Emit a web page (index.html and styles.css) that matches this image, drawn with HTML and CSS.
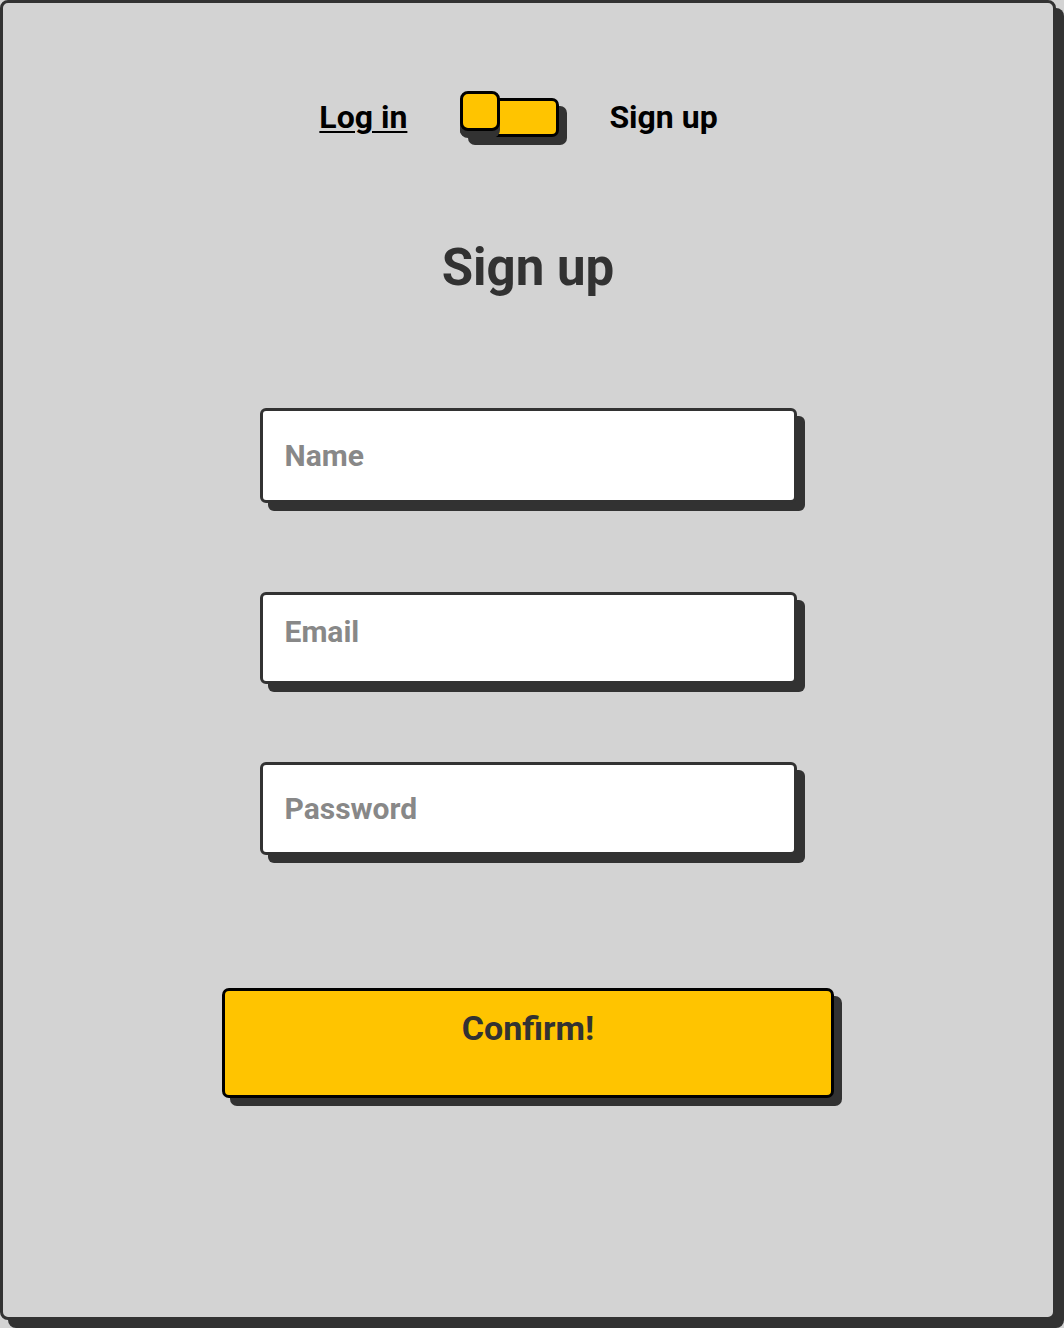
FILE: index.html
```html
<!DOCTYPE html>
<html lang="en">
<head>
<meta charset="utf-8">
<title>Sign up</title>
<link rel="stylesheet" href="styles.css">
</head>
<body>
<main class="card">
  <div class="toggle-row">
    <span class="toggle-label active">Log in</span>
    <span class="switch"><span class="knob"></span></span>
    <span class="toggle-label">Sign up</span>
  </div>
  <h1 class="title">Sign up</h1>
  <form class="form">
    <input class="field field-name" type="text" placeholder="Name">
    <input class="field field-email" type="email" placeholder="Email">
    <input class="field field-pass" type="password" placeholder="Password">
    <button class="confirm" type="button">Confirm!</button>
  </form>
</main>
</body>
</html>
```

FILE: styles.css
```css
html, body {
  margin: 0;
  padding: 0;
  background: #d3d3d3;
}
body {
  font-family: Roboto, "Liberation Sans", sans-serif;
  width: 1064px;
  height: 1328px;
}
.card {
  box-sizing: border-box;
  width: 1056px;
  height: 1320px;
  background: #d3d3d3;
  border: 3px solid #323232;
  border-radius: 8px;
  box-shadow: 8px 8px 0 #323232;
  display: flex;
  flex-direction: column;
  align-items: center;
  padding-top: 88px;
}
.toggle-row {
  display: flex;
  align-items: center;
  height: 52px;
  margin-right: 19px;
}
.toggle-label {
  font-size: 32px;
  font-weight: 700;
  color: #000;
  line-height: 1;
}
.toggle-label.active {
  text-decoration: underline;
  text-decoration-thickness: 2px;
  text-underline-offset: 3px;
}
.switch {
  position: relative;
  box-sizing: border-box;
  width: 99px;
  height: 39px;
  margin: 0 50px 0 53px;
  background: #ffc400;
  border: 3px solid #000;
  border-radius: 7px;
  box-shadow: 8px 8px 0 #323232;
}
.knob {
  position: absolute;
  box-sizing: border-box;
  left: -3px;
  top: -10px;
  width: 40px;
  height: 40px;
  background: #ffc400;
  border: 3px solid #000;
  border-radius: 8px;
  box-shadow: 0 7px 0 #323232;
}
.title {
  margin: 95px 0 0;
  font-size: 51px;
  line-height: 60px;
  font-weight: 700;
  color: #323232;
}
.form {
  display: flex;
  flex-direction: column;
  align-items: center;
}
.field {
  box-sizing: border-box;
  width: 537px;
  background: #fff;
  border: 3px solid #323232;
  border-radius: 6px;
  box-shadow: 8px 8px 0 #323232;
  padding: 0 22px;
  font-family: Roboto, "Liberation Sans", sans-serif;
  font-size: 30px;
  font-weight: 700;
  color: #323232;
  outline: none;
}
.field::placeholder {
  color: #888;
  opacity: 1;
}
.field-name {
  margin-top: 110px;
  height: 95px;
}
.field-email {
  margin-top: 89px;
  height: 92px;
  padding-bottom: 14px;
}
.field-pass {
  margin-top: 78px;
  height: 93px;
}
.confirm {
  box-sizing: border-box;
  margin-top: 133px;
  width: 612px;
  height: 110px;
  background: #ffc400;
  border: 3px solid #000;
  border-radius: 7px;
  box-shadow: 8px 8px 0 #323232;
  font-family: Roboto, "Liberation Sans", sans-serif;
  font-size: 34px;
  font-weight: 700;
  color: #323232;
  padding: 18px 0 0;
  display: flex;
  justify-content: center;
  align-items: flex-start;
  line-height: 38px;
}
```
